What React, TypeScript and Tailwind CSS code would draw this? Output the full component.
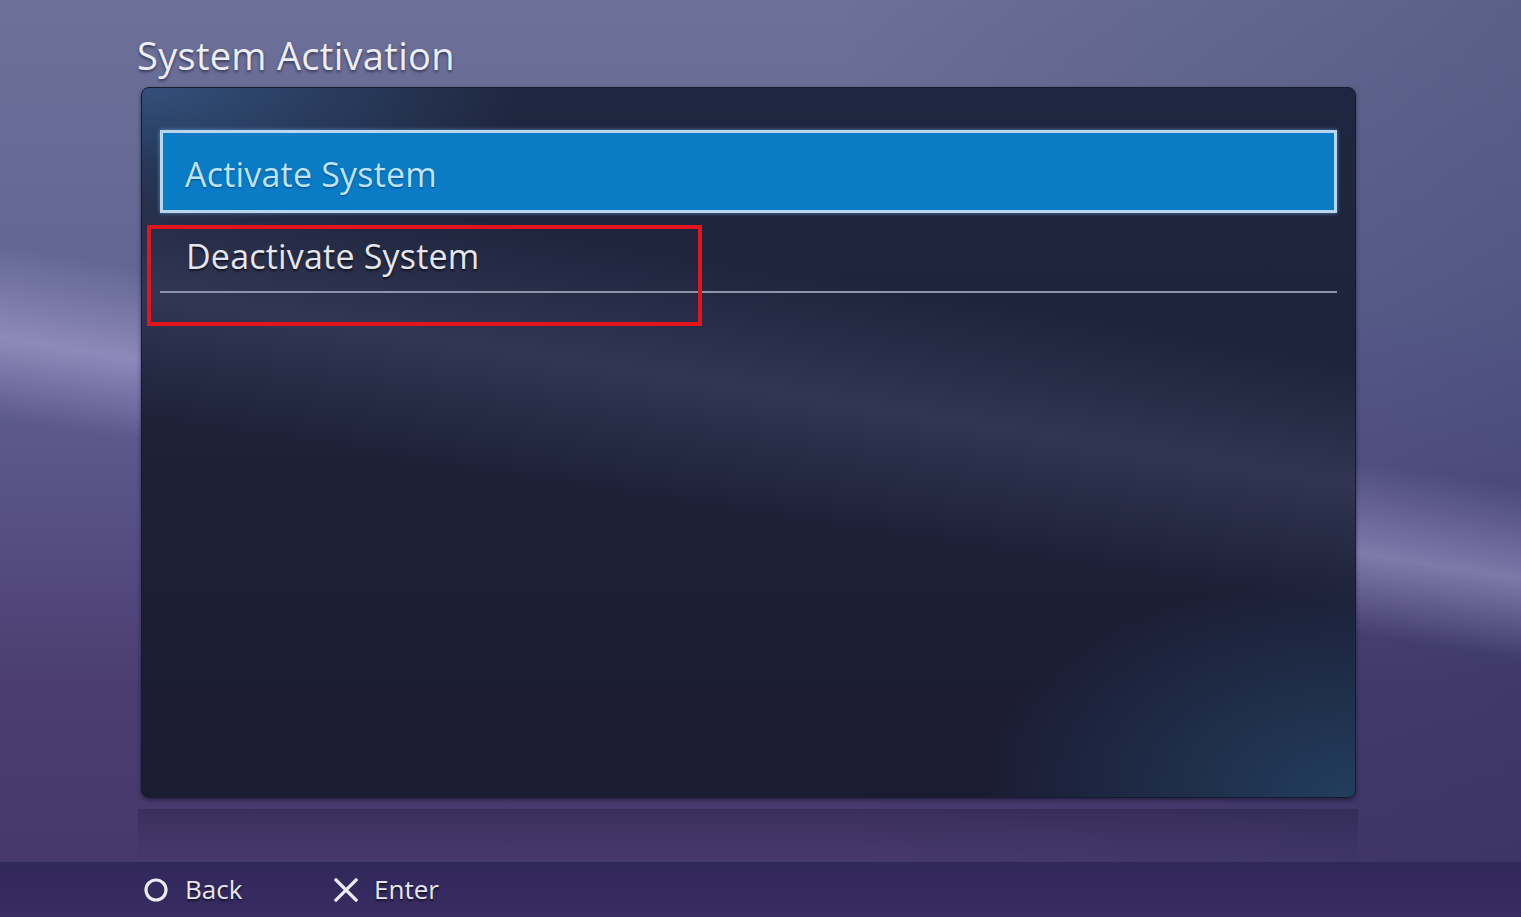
export default function App() {
  const font = "font-['Open_Sans','Noto_Sans',sans-serif]";

  return (
    <div
      className={`${font} flex h-[917px] w-full flex-col overflow-hidden bg-[linear-gradient(189deg,rgba(255,255,255,0)_0%,rgba(255,255,255,0)_42%,rgba(205,195,245,0.42)_50%,rgba(255,255,255,0)_57%,rgba(255,255,255,0)_100%),linear-gradient(90deg,rgba(20,40,80,0)_55%,rgba(20,40,80,0.22)_100%),linear-gradient(180deg,#6d7098_0%,#636693_30%,#5b5689_50%,#4b3d70_75%,#46376a_100%)]`}
    >
      {/* title */}
      <div className="pl-[137px] pt-[29px] h-[87px]">
        <h1 className="text-[38px] font-medium leading-[52px] tracking-[0.3px] text-[#eceef5] [text-shadow:0_2px_3px_rgba(20,20,50,0.6)]">
          System Activation
        </h1>
      </div>

      {/* panel */}
      <div className="relative ml-[141px] h-[711px] w-[1215px] rounded-[8px] border border-[#151a2c] bg-[radial-gradient(ellipse_380px_140px_at_0%_0%,rgba(70,120,180,0.5),rgba(70,120,180,0)),radial-gradient(ellipse_380px_220px_at_100%_100%,rgba(40,90,130,0.55),rgba(40,90,130,0)),linear-gradient(189deg,rgba(255,255,255,0)_30%,rgba(120,125,170,0.22)_44%,rgba(255,255,255,0)_58%),linear-gradient(180deg,#1f2740_0%,#1d2239_45%,#1b1b32_100%)] px-[18px] pt-[42px] shadow-[0_2px_4px_rgba(10,10,30,0.5)]">
        <div className="flex h-[83px] items-center border-[3px] border-[#b8d6ef] bg-[#0a7cc6] pl-[22px] pt-[6px] shadow-[0_0_4px_rgba(120,190,250,0.6)]">
          <span className="text-[34px] font-medium tracking-[0.2px] text-[#bfe3fb] [text-shadow:0_1px_2px_rgba(0,40,90,0.6)]">
            Activate System
          </span>
        </div>
        <div className="flex h-[80px] items-center border-b-2 border-[#8c94aa] pl-[26px] pt-[8px]">
          <span className="text-[34px] font-medium tracking-[0.2px] text-[#e4e6ee] [text-shadow:0_2px_2px_rgba(0,0,0,0.6)]">
            Deactivate System
          </span>
        </div>

        {/* annotation */}
        <div className="absolute left-[5px] top-[137px] h-[101px] w-[555px] border-4 border-[#e3141c]" />
      </div>

      {/* reflection */}
      <div className="ml-[138px] mt-[11px] h-[53px] w-[1220px] bg-[linear-gradient(180deg,rgba(30,25,60,0.35)_0%,rgba(30,25,60,0.15)_50%,rgba(255,255,255,0)_100%)]" />

      {/* bottom bar */}
      <div className="flex h-[55px] items-center bg-[linear-gradient(180deg,#31285a_0%,#382c62_100%)] pl-[143px] text-[26px] font-medium text-[#e6e6ee] [text-shadow:0_2px_2px_rgba(0,0,0,0.6)]">
        <svg width="26" height="26" viewBox="0 0 26 26" className="mr-[16px]">
          <circle cx="13" cy="13" r="10" fill="none" stroke="#ebebf2" strokeWidth="3.2" />
        </svg>
        <span className="w-[148px]">Back</span>
        <svg width="26" height="26" viewBox="0 0 26 26" className="mr-[15px]">
          <path d="M3 3 L23 23 M23 3 L3 23" stroke="#ebebf2" strokeWidth="3.2" strokeLinecap="square" />
        </svg>
        <span>Enter</span>
      </div>
    </div>
  );
}
